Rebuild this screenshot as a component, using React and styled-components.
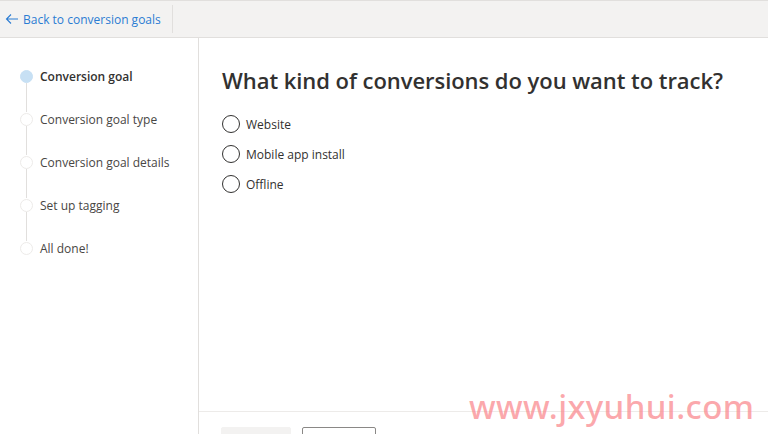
import styled, { createGlobalStyle } from "styled-components";

const GlobalStyle = createGlobalStyle`
  html, body {
    margin: 0;
    padding: 0;
    background: #ffffff;
    font-family: "Open Sans", "Noto Sans", sans-serif;
    color: #323130;
    overflow: hidden;
  }
`;

const Page = styled.div`
  height: 434px;
  display: flex;
  flex-direction: column;
  position: relative;
  overflow: hidden;
`;

const TopBar = styled.div`
  height: 36px;
  flex: none;
  display: flex;
  align-items: center;
  background: #f3f2f1;
  border-top: 1px solid #e1dfdd;
  border-bottom: 1px solid #e1dfdd;
`;

const BackLink = styled.a`
  display: flex;
  align-items: center;
  gap: 4px;
  height: 28px;
  padding: 0 11px 0 5px;
  border-right: 1px solid #e1dfdd;
  color: #2b7cd3;
  font-size: 12px;
  text-decoration: none;
  cursor: pointer;
`;

const Body = styled.div`
  flex: 1;
  display: flex;
  min-height: 0;
`;

const Sidebar = styled.nav`
  width: 199px;
  flex: none;
  border-right: 1px solid #e1dfdd;
  padding: 31px 0 0 20px;
  box-sizing: border-box;
`;

const Step = styled.div`
  display: flex;
  align-items: center;
  gap: 7px;
  height: 14px;
  font-size: 12px;
  font-weight: ${(p) => (p.$active ? 600 : 400)};
  color: ${(p) => (p.$active ? "#323130" : "#484644")};
`;

const Dot = styled.span`
  width: 13px;
  height: 13px;
  box-sizing: border-box;
  border-radius: 50%;
  flex: none;
  background: ${(p) => (p.$active ? "#c7e0f4" : "#ffffff")};
  border: 1px solid ${(p) => (p.$active ? "#c7e0f4" : "#edebe9")};
`;

const Connector = styled.div`
  width: 1px;
  height: 29px;
  margin-left: 6px;
  background: #e1dfdd;
`;

const Main = styled.main`
  flex: 1;
  display: flex;
  flex-direction: column;
`;

const Content = styled.div`
  flex: 1;
  padding: 27px 0 0 23px;
`;

const Title = styled.h1`
  margin: 0 0 20px;
  font-size: 22px;
  font-weight: 600;
  letter-spacing: -0.05px;
  color: #323130;
`;

const Options = styled.div`
  display: flex;
  flex-direction: column;
  gap: 12px;
`;

const Option = styled.label`
  display: flex;
  align-items: center;
  gap: 6px;
  height: 18px;
  font-size: 12px;
  color: #323130;
  cursor: pointer;
`;

const Radio = styled.span`
  width: 18px;
  height: 18px;
  box-sizing: border-box;
  border-radius: 50%;
  border: 1px solid #323130;
  flex: none;
`;

const Footer = styled.div`
  height: 23px;
  flex: none;
  box-sizing: border-box;
  border-top: 1px solid #edebe9;
  display: flex;
  gap: 11px;
  align-items: flex-start;
  padding: 15px 0 0 22px;
  overflow: hidden;
`;

const Button = styled.button`
  width: ${(p) => p.$w}px;
  height: 32px;
  flex: none;
  border-radius: 2px;
  font-family: inherit;
  font-size: 13px;
  background: ${(p) => (p.$primary ? "#f3f2f1" : "#ffffff")};
  border: 1px solid ${(p) => (p.$primary ? "#f3f2f1" : "#8a8886")};
  color: #a19f9d;
`;

const Watermark = styled.div`
  position: absolute;
  left: 469px;
  top: 384px;
  font-family: "Noto Sans", sans-serif;
  font-size: 33px;
  font-weight: 500;
  color: rgba(250, 140, 145, 0.75);
  letter-spacing: 0.4px;
  pointer-events: none;
`;

const steps = [
  "Conversion goal",
  "Conversion goal type",
  "Conversion goal details",
  "Set up tagging",
  "All done!",
];

const options = ["Website", "Mobile app install", "Offline"];

export default function App() {
  return (
    <Page>
      <GlobalStyle />
      <TopBar>
        <BackLink>
          <svg width="14" height="12" viewBox="0 0 14 12" fill="none">
            <path
              d="M13 6H1.5M6 1.5L1.5 6L6 10.5"
              stroke="#2b7cd3"
              strokeWidth="1.1"
            />
          </svg>
          Back to conversion goals
        </BackLink>
      </TopBar>
      <Body>
        <Sidebar>
          {steps.map((s, i) => (
            <div key={s}>
              <Step $active={i === 0}>
                <Dot $active={i === 0} />
                {s}
              </Step>
              {i < steps.length - 1 && <Connector />}
            </div>
          ))}
        </Sidebar>
        <Main>
          <Content>
            <Title>What kind of conversions do you want to track?</Title>
            <Options>
              {options.map((o) => (
                <Option key={o}>
                  <Radio />
                  {o}
                </Option>
              ))}
            </Options>
          </Content>
          <Footer>
            <Button $primary $w={70} />
            <Button $w={74} />
          </Footer>
        </Main>
      </Body>
      <Watermark>www.jxyuhui.com</Watermark>
    </Page>
  );
}
